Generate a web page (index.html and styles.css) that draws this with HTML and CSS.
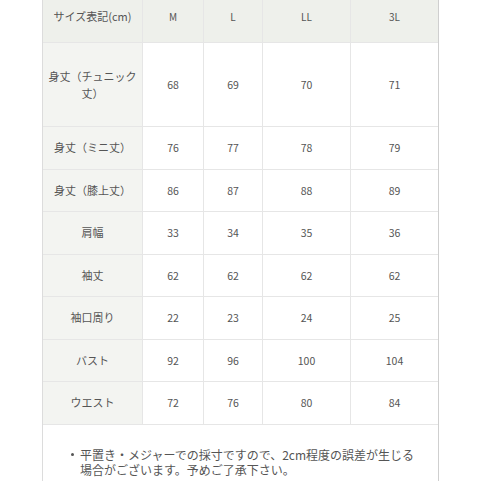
FILE: index.html
```html
<!DOCTYPE html>
<html lang="ja">
<head>
<meta charset="utf-8">
<link rel="stylesheet" href="styles.css">
</head>
<body>
<div class="sheet">
  <div class="grid">
    <div class="cell head label">サイズ表記(cm)</div>
    <div class="cell head">M</div>
    <div class="cell head">L</div>
    <div class="cell head">LL</div>
    <div class="cell head">3L</div>

    <div class="cell label two">身丈（チュニック<br>丈）</div>
    <div class="cell">68</div><div class="cell">69</div><div class="cell">70</div><div class="cell">71</div>

    <div class="cell label">身丈（ミニ丈）</div>
    <div class="cell">76</div><div class="cell">77</div><div class="cell">78</div><div class="cell">79</div>

    <div class="cell label">身丈（膝上丈）</div>
    <div class="cell">86</div><div class="cell">87</div><div class="cell">88</div><div class="cell">89</div>

    <div class="cell label">肩幅</div>
    <div class="cell">33</div><div class="cell">34</div><div class="cell">35</div><div class="cell">36</div>

    <div class="cell label">袖丈</div>
    <div class="cell">62</div><div class="cell">62</div><div class="cell">62</div><div class="cell">62</div>

    <div class="cell label">袖口周り</div>
    <div class="cell">22</div><div class="cell">23</div><div class="cell">24</div><div class="cell">25</div>

    <div class="cell label">バスト</div>
    <div class="cell">92</div><div class="cell">96</div><div class="cell">100</div><div class="cell">104</div>

    <div class="cell label">ウエスト</div>
    <div class="cell">72</div><div class="cell">76</div><div class="cell">80</div><div class="cell">84</div>
  </div>
  <div class="note">
    <ul>
      <li>平置き・メジャーでの採寸ですので、2cm程度の誤差が生じる場合がございます。予めご了承下さい。</li>
    </ul>
  </div>
</div>
</body>
</html>
```

FILE: styles.css
```css
* { box-sizing: border-box; }
html, body { margin: 0; padding: 0; background: #ffffff; }
body {
  width: 481px;
  height: 481px;
  overflow: hidden;
  font-family: "Noto Sans CJK JP", "Noto Sans", sans-serif;
  color: #555555;
}
.sheet {
  margin-left: 42px;
  width: 397px;
  border-left: 1px solid #dcdcdc;
  border-right: 1px solid #cfcfcf;
}
.grid {
  display: grid;
  grid-template-columns: 100px 61px 59px 88px 87px;
  grid-template-rows: 43px 84px repeat(7, 42.5px);
}
.cell {
  display: flex;
  align-items: center;
  justify-content: center;
  text-align: center;
  font-size: 10.5px;
  line-height: 17px;
  background: #ffffff;
  border-right: 1px solid #e6e6e6;
  border-bottom: 1px solid #e6e6e6;
}
.cell:nth-child(5n) { border-right: none; }
.label {
  background: #f3f4f1;
  font-size: 11px;
  padding: 0 4px;
}
.head {
  background: #eef0eb;
  padding-bottom: 9px;
  font-size: 10px;
}
.head.label { font-size: 11px; }
.note {
  padding: 22px 0 20px 0;
}
.note ul {
  margin: 0;
  padding: 0 0 0 37px;
  width: 380px;
  font-size: 12px;
  line-height: 15px;
  list-style: none;
}
.note li {
  position: relative;
}
.note li::before {
  content: "";
  position: absolute;
  left: -9px;
  top: 6px;
  width: 3px;
  height: 3px;
  border-radius: 50%;
  background: #555555;
}
```
